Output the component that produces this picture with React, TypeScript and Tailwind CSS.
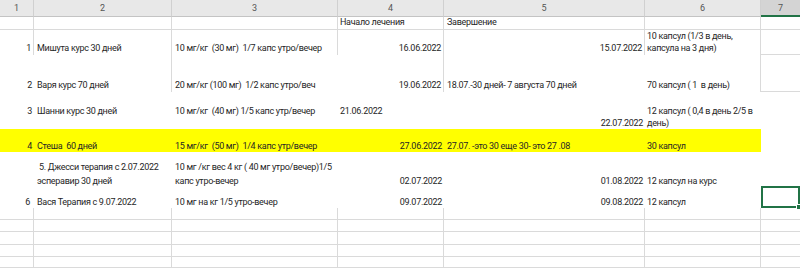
import React from "react";

type CProps = {
  w: string;
  b?: string;
  v?: string;
  a?: string;
  p?: string;
  children?: React.ReactNode;
};

function C({ w, b = "", v = "justify-end", a = "text-left", p = "", children }: CProps) {
  return (
    <div className={`${w} ${b} ${v} ${a} ${p} relative flex shrink-0 flex-col whitespace-pre`}>
      {children}
    </div>
  );
}

const W1 = "w-[34px]";
const W2 = "w-[138px]";
const W3 = "w-[166px]";
const W4 = "w-[106px]";
const W5 = "w-[201px]";
const W6 = "w-[116px]";
const W7 = "w-[39px]";

function EmptyRow({ h }: { h: string }) {
  const b = "border-r border-b border-[#dadada]";
  return (
    <div className={`flex ${h}`}>
      <C w={W1} b={b} />
      <C w={W2} b={b} />
      <C w={W3} b={b} />
      <C w={W4} b={b} />
      <C w={W5} b={b} />
      <C w={W6} b={b} />
      <C w={W7} b="border-b border-[#dadada]" />
    </div>
  );
}

export default function App() {
  const hb = "border-r border-b border-r-[#d0d0d0] border-b-[#c4c4c4] bg-[#e8e8e8]";
  const gr = "border-r border-[#dadada]";
  return (
    <div className="h-[268px] w-[800px] overflow-hidden bg-white font-['Roboto',sans-serif] text-[9px] leading-[12px] tracking-[-0.3px] text-[#262626]">
      {/* column header */}
      <div className="flex h-[17px] text-[#555] tracking-normal">
        <C w={W1} b={hb} v="justify-center" a="text-center">1</C>
        <C w={W2} b={hb} v="justify-center" a="text-center">2</C>
        <C w={W3} b={hb} v="justify-center" a="text-center">3</C>
        <C w={W4} b={hb} v="justify-center" a="text-center">4</C>
        <C w={W5} b={hb} v="justify-center" a="text-center">5</C>
        <C w={W6} b={hb} v="justify-center" a="text-center">6</C>
        <C w={W7} b="border-b-2 border-b-[#217346] bg-[#d4d4d4]" v="justify-center" a="text-center">7</C>
      </div>

      {/* row: titles */}
      <div className="flex h-[13px]">
        <C w={W1} b="border-r border-b border-[#dadada]" />
        <C w={W2} b="border-r border-b border-[#dadada]" />
        <C w={W3} b="border-r border-b border-[#dadada]" />
        <C w={W4} b="border-r border-b border-[#dadada]" p="pl-[2px] pb-[1px]">Начало лечения</C>
        <C w={W5} b="border-r border-b border-[#dadada]" p="pl-[3px] pb-[1px]">Завершение</C>
        <C w={W6} b="border-r border-b border-[#dadada]" />
        <C w={W7} b="border-b border-[#dadada]" />
      </div>

      {/* Мишута */}
      <div className="flex h-[25px]">
        <C w={W1} b={gr} a="text-right" p="pr-[2px] pb-[1px]">1</C>
        <C w={W2} b={gr} p="pl-[3px] pb-[1px]">Мишута курс 30 дней</C>
        <C w={W3} b={gr} p="pl-[3px] pb-[1px]">10 мг/кг  (30 мг)  1/7 капс утро/вечер</C>
        <C w={W4} b={gr} a="text-right" p="pr-[2px] pb-[1px]">16.06.2022</C>
        <C w={W5} b={gr} a="text-right" p="pr-[2px] pb-[1px]">15.07.2022</C>
        <C w={W6} b={gr} p="pl-[2px] pb-[1px]">
          <span>10 капсул (1/3 в день,</span>
          <span>капсула на 3 дня)</span>
        </C>
        <C w={W7} b="border-b border-[#dadada]" />
      </div>

      {/* Варя */}
      <div className="flex h-[37px]">
        <C w={W1} a="text-right" p="pr-[2px] pb-[1px]">2</C>
        <C w={W2} b={gr} p="pl-[3px] pb-[1px]">Варя курс 70 дней</C>
        <C w={W3} p="pl-[3px] pb-[1px]">20 мг/кг (100 мг)  1/2 капс утро/веч</C>
        <C w={W4} b={gr} a="text-right" p="pr-[2px] pb-[1px]">19.06.2022</C>
        <C w={W5} p="pl-[3px] pb-[1px]">18.07.-30 дней- 7 августа 70 дней</C>
        <C w={W6} b={gr} p="pl-[2px] pb-[1px]">70 капсул ( 1  в день)</C>
        <C w={W7} b="border-b border-[#dadada]" />
      </div>

      {/* Шанни */}
      <div className="flex h-[37px]">
        <C w={W1} a="text-right" p="pr-[2px] pb-[12px]">3</C>
        <C w={W2} p="pl-[3px] pb-[12px]">Шанни курс 30 дней</C>
        <C w={W3} p="pl-[3px] pb-[12px]">10 мг/кг  (40 мг) 1/5 капс утр/вечер</C>
        <C w={W4} p="pl-[2px] pb-[12px]">21.06.2022</C>
        <C w={W5} a="text-right" p="pr-[2px]">22.07.2022</C>
        <C w={W6} p="pl-[2px]">
          <span>12 капсул ( 0,4 в день 2/5 в</span>
          <span>день)</span>
        </C>
        <C w={W7} />
      </div>

      {/* Стеша */}
      <div className="flex h-[23px]">
        <C w={W1} b="bg-[#ffff00]" a="text-right" p="pr-[2px]">4</C>
        <C w={W2} b="bg-[#ffff00]" p="pl-[3px]">Стеша  60 дней</C>
        <C w={W3} b="bg-[#ffff00]" p="pl-[3px]">15 мг/кг  (50 мг)  1/4 капс утр/вечер</C>
        <C w={W4} b="bg-[#ffff00]" a="text-right" p="pr-[2px]">27.06.2022</C>
        <C w={W5} b="bg-[#ffff00]" p="pl-[3px]">27.07. -это 30 еще 30- это 27 .08</C>
        <C w={W6} b="bg-[#ffff00]" p="pl-[2px]">30 капсул</C>
        <C w={W7} />
      </div>

      {/* Джесси */}
      <div className="flex h-[34px] leading-[14px]">
        <C w={W1} />
        <C w={W2} v="justify-start" p="pl-[3px] pt-[8px]">
          <span> 5. Джесси терапия с 2.07.2022</span>
          <span>эсперавир 30 дней</span>
        </C>
        <C w={W3} v="justify-start" p="pl-[3px] pt-[8px]">
          <span>10 мг /кг вес 4 кг ( 40 мг утро/вечер)1/5</span>
          <span>капс утро-вечер</span>
        </C>
        <C w={W4} v="justify-start" a="text-right" p="pr-[2px] pt-[22px]">02.07.2022</C>
        <C w={W5} v="justify-start" a="text-right" p="pr-[2px] pt-[22px]">01.08.2022</C>
        <C w={W6} v="justify-start" p="pl-[2px] pt-[22px]">12 капсул на курс</C>
        <C w={W7} />
      </div>

      {/* Вася */}
      <div className="flex h-[22px]">
        <C w={W1} a="text-right" p="pr-[4px]">6</C>
        <C w={W2} p="pl-[3px]">Вася Терапия с 9.07.2022</C>
        <C w={W3} p="pl-[3px]">10 мг на кг 1/5 утро-вечер</C>
        <C w={W4} a="text-right" p="pr-[2px]">09.07.2022</C>
        <C w={W5} a="text-right" p="pr-[2px]">09.08.2022</C>
        <C w={W6} p="pl-[2px]">12 капсул</C>
        <C w={W7} b="border-2 border-[#217346]">
          <span className="absolute -bottom-[4px] -right-[4px] h-[6px] w-[6px] border border-white bg-[#217346]" />
        </C>
      </div>

      <EmptyRow h="h-[12px]" />
      <EmptyRow h="h-[12px]" />
      <EmptyRow h="h-[13px]" />
      <EmptyRow h="h-[12px]" />
      <EmptyRow h="h-[11px]" />
    </div>
  );
}
